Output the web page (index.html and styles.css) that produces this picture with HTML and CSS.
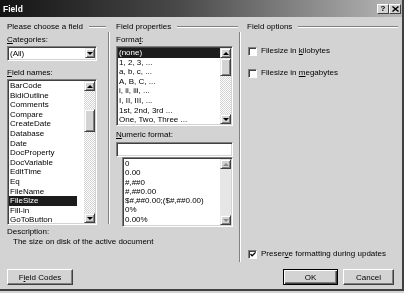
FILE: index.html
```html
<!DOCTYPE html>
<html lang="en">
<head>
    <meta charset="UTF-8">
    <title>Field</title>
    <link rel="stylesheet" href="styles.css">
</head>
<body>
    <div class="window">
        <div class="titlebar">
            <span class="title">Field</span>
            <div class="title-buttons">
                <span class="tbtn">?</span>
                <span class="tbtn">
                    <svg width="7" height="6" viewBox="0 0 7 6"><path d="M0.5 0.5 L6.5 5.5 M6.5 0.5 L0.5 5.5" stroke="#000" stroke-width="1.4"/></svg>
                </span>
            </div>
        </div>

        <div class="main">
            <div class="group-head head-1"><span>Please choose a field</span><i class="groove"></i></div>
            <div class="group-head head-2"><span>Field properties</span><i class="groove"></i></div>
            <div class="group-head head-3"><span>Field options</span><i class="groove"></i></div>

            <!-- left column -->
            <div class="col col-1">
                <div class="label first"><u>C</u>ategories:</div>
                <div class="combo">
                    <span class="combo-text">(All)</span>
                    <span class="sbtn"><b class="arrow-down"></b></span>
                </div>
                <div class="label names"><u>F</u>ield names:</div>
                <div class="listbox names-list">
                    <div class="items">
                        <div>BarCode</div>
                        <div>BidiOutline</div>
                        <div>Comments</div>
                        <div>Compare</div>
                        <div>CreateDate</div>
                        <div>Database</div>
                        <div>Date</div>
                        <div>DocProperty</div>
                        <div>DocVariable</div>
                        <div>EditTime</div>
                        <div>Eq</div>
                        <div>FileName</div>
                        <div class="selected short">FileSize</div>
                        <div>Fill-in</div>
                        <div>GoToButton</div>
                    </div>
                    <div class="vscroll">
                        <span class="sbtn"><b class="arrow-up"></b></span>
                        <span class="track names-gap"></span>
                        <span class="thumb names-thumb"></span>
                        <span class="track grow"></span>
                        <span class="sbtn"><b class="arrow-down"></b></span>
                    </div>
                </div>
            </div>
            <div class="sep sep-1"></div>

            <!-- middle column -->
            <div class="col col-2">
                <div class="label first">Forma<u>t</u>:</div>
                <div class="listbox format-list">
                    <div class="items">
                        <div class="selected">(none)</div>
                        <div>1, 2, 3, ...</div>
                        <div>a, b, c, ...</div>
                        <div>A, B, C, ...</div>
                        <div>i, ii, iii, ...</div>
                        <div>I, II, III, ...</div>
                        <div>1st, 2nd, 3rd ...</div>
                        <div>One, Two, Three ...</div>
                    </div>
                    <div class="vscroll">
                        <span class="sbtn"><b class="arrow-up"></b></span>
                        <span class="thumb format-thumb"></span>
                        <span class="track grow"></span>
                        <span class="sbtn"><b class="arrow-down"></b></span>
                    </div>
                </div>
                <div class="label numeric"><u>N</u>umeric format:</div>
                <div class="textbox"></div>
                <div class="listbox numeric-list">
                    <div class="items">
                        <div>0</div>
                        <div>0.00</div>
                        <div>#,##0</div>
                        <div>#,##0.00</div>
                        <div>$#,##0.00;($#,##0.00)</div>
                        <div>0%</div>
                        <div>0.00%</div>
                    </div>
                    <div class="vscroll disabled">
                        <span class="sbtn"><b class="arrow-up"></b></span>
                        <span class="track plain grow"></span>
                        <span class="sbtn"><b class="arrow-down"></b></span>
                    </div>
                </div>
            </div>
            <div class="sep sep-2"></div>

            <!-- right column -->
            <div class="col col-3">
                <div class="check opt-1"><span class="box"></span><span>Filesize in <u>k</u>ilobytes</span></div>
                <div class="check opt-2"><span class="box"></span><span>Filesize in <u>m</u>egabytes</span></div>
            </div>

            <div class="description">
                <div>Description:</div>
                <div class="desc-text">The size on disk of the active document</div>
            </div>
            <div class="preserve">
                <div class="check"><span class="box checked"><svg width="7" height="7" viewBox="0 0 7 7"><path d="M0.5 3 L2.5 5 L6.5 1" fill="none" stroke="#000" stroke-width="1.5"/></svg></span><span>Preser<u>v</u>e formatting during updates</span></div>
            </div>
        </div>

        <div class="buttons">
            <button class="btn codes">F<u>i</u>eld Codes</button>
            <div class="right-buttons">
                <button class="btn ok">OK</button>
                <button class="btn cancel">Cancel</button>
            </div>
        </div>
    </div>
</body>
</html>
```

FILE: styles.css
```css
/* General */
* {
    box-sizing: border-box;
}

body {
    margin: 0;
    background-color: #d3d3d3;
    font-family: 'Liberation Sans', Arial, sans-serif;
    font-size: 8px;
    color: #000;
}

u {
    text-decoration-thickness: 1px;
    text-underline-offset: 1px;
}

.window {
    width: 404px;
    height: 291px;
    background-color: #d3d3d3;
    border-right: 2px solid #404040;
    border-bottom: 2px solid #404040;
    display: flex;
    flex-direction: column;
    filter: grayscale(1);
}

/* Title bar */
.titlebar {
    height: 17px;
    background: linear-gradient(to right, #141414 0%, #4a4a4a 45%, #b8b8b8 100%);
    display: flex;
    align-items: center;
    justify-content: space-between;
    padding: 0 1px 0 3px;
}

.title {
    color: #fff;
    font-weight: bold;
    font-size: 8.5px;
}

.title-buttons {
    display: flex;
}

.tbtn {
    width: 12px;
    height: 10px;
    background-color: #d3d3d3;
    border: 1px solid;
    border-color: #fff #404040 #404040 #fff;
    display: flex;
    align-items: center;
    justify-content: center;
    font-weight: bold;
    font-size: 8px;
    line-height: 1;
}

/* Main grid */
.main {
    display: grid;
    grid-template-columns: 101px 2px 6px 123px 2px 6px 151px;
    grid-template-rows: 15px 193px 37px;
    padding-left: 7px;
}

.group-head {
    grid-row: 1;
    display: flex;
    align-items: center;
    gap: 6px;
    padding-top: 5px;
    line-height: 10px;
    white-space: nowrap;
}

.groove {
    flex: 1;
    height: 2px;
    border-top: 1px solid #808080;
    border-bottom: 1px solid #fff;
}

.head-1 { grid-column: 1 / 3; padding-right: 4px; }
.head-2 { grid-column: 4 / 6; padding-right: 3px; }
.head-3 { grid-column: 7; }

.sep {
    border-left: 1px solid #808080;
    border-right: 1px solid #fff;
}

.sep-1 { grid-column: 2; grid-row: 2; margin-bottom: 1px; }
.sep-2 { grid-column: 5; grid-row: 2 / 4; }

.col { grid-row: 2; }
.col-1 { grid-column: 1; }
.col-2 { grid-column: 4; }
.col-3 { grid-column: 7; }

.label {
    line-height: 10px;
    white-space: nowrap;
}

.label.first { margin-top: 3px; margin-bottom: 1px; }
.label.names { margin-top: 7px; margin-bottom: 1px; }
.label.numeric { margin-top: 4px; margin-bottom: 2px; }

/* Sunken controls */
.combo,
.listbox,
.textbox {
    background-color: #fff;
    border: 1px solid;
    border-color: #808080 #fff #fff #808080;
    box-shadow: inset 1px 1px #404040, inset -1px -1px #d3d3d3;
    padding: 1px;
}

.combo {
    width: 90px;
    height: 15px;
    display: flex;
}

.combo-text {
    flex: 1;
    padding-left: 1px;
    line-height: 11px;
}

.listbox {
    display: flex;
    overflow: hidden;
}

.names-list { width: 90px; height: 146px; }
.format-list { width: 117px; height: 80px; }
.numeric-list { width: 111px; height: 70px; margin-left: 6px; }

.textbox {
    width: 117px;
    height: 15px;
}

.items {
    flex: 1;
    overflow: hidden;
    line-height: 9.6px;
    white-space: nowrap;
}

.numeric-list .items {
    line-height: 9.3px;
}

.items div {
    padding-left: 1px;
}

.items .selected {
    background-color: #1c1c1c;
    color: #fff;
}

.items .short {
    width: 68px;
}

/* Scrollbars */
.vscroll {
    width: 11px;
    display: flex;
    flex-direction: column;
}

.sbtn {
    width: 10px;
    height: 10px;
    flex-shrink: 0;
    background-color: #d3d3d3;
    border: 1px solid;
    border-color: #e8e8e8 #404040 #404040 #e8e8e8;
    box-shadow: inset 1px 1px #fff, inset -1px -1px #808080;
    display: flex;
    align-items: center;
    justify-content: center;
}

.vscroll .sbtn {
    width: 11px;
}

.arrow-up,
.arrow-down {
    width: 0;
    height: 0;
    border-left: 3px solid transparent;
    border-right: 3px solid transparent;
}

.arrow-up { border-bottom: 3px solid #000; }
.arrow-down { border-top: 3px solid #000; }

.disabled .arrow-up { border-bottom-color: #8c8c8c; }
.disabled .arrow-down { border-top-color: #8c8c8c; }

.track {
    background: repeating-conic-gradient(#fff 0 25%, #d3d3d3 0 50%) 0 0 / 2px 2px;
}

.track.plain {
    background: #e6e6e6;
}

.grow { flex: 1; }

.thumb {
    flex-shrink: 0;
    background-color: #d3d3d3;
    border: 1px solid;
    border-color: #e8e8e8 #404040 #404040 #e8e8e8;
    box-shadow: inset 1px 1px #fff, inset -1px -1px #808080;
}

.names-gap { height: 18px; flex-shrink: 0; }
.names-thumb { height: 23px; }
.format-thumb { height: 18px; }

/* Checkboxes */
.check {
    display: flex;
    align-items: center;
    gap: 4px;
    line-height: 10px;
    white-space: nowrap;
}

.box {
    width: 9px;
    height: 9px;
    margin-left: 1px;
    background-color: #fff;
    border: 1px solid;
    border-color: #808080 #fff #fff #808080;
    box-shadow: inset 1px 1px #404040;
    display: flex;
    align-items: center;
    justify-content: center;
}

.box svg {
    margin: 1px 0 0 1px;
}

.opt-1 { margin-top: 14px; }
.opt-2 { margin-top: 12px; }

/* Description and preserve */
.description {
    grid-column: 1 / 5;
    grid-row: 3;
    padding-top: 2px;
    line-height: 10px;
    white-space: nowrap;
}

.desc-text {
    padding-left: 6px;
}

.preserve {
    grid-column: 7;
    grid-row: 3;
    padding-top: 24px;
}

/* Bottom buttons */
.buttons {
    display: flex;
    justify-content: space-between;
    padding: 7px 8px 0 7px;
}

.right-buttons {
    display: flex;
    gap: 5px;
}

.btn {
    height: 16px;
    padding: 0;
    font-family: inherit;
    font-size: 8px;
    color: #000;
    background-color: #d3d3d3;
    border: 1px solid;
    border-color: #fff #404040 #404040 #fff;
    box-shadow: inset -1px -1px #808080;
}

.codes { width: 66px; }
.ok {
    width: 55px;
    border-color: #000;
    box-shadow: inset 1px 1px #fff, inset -1px -1px #404040, inset -2px -2px #808080;
}
.cancel { width: 51px; }
```
